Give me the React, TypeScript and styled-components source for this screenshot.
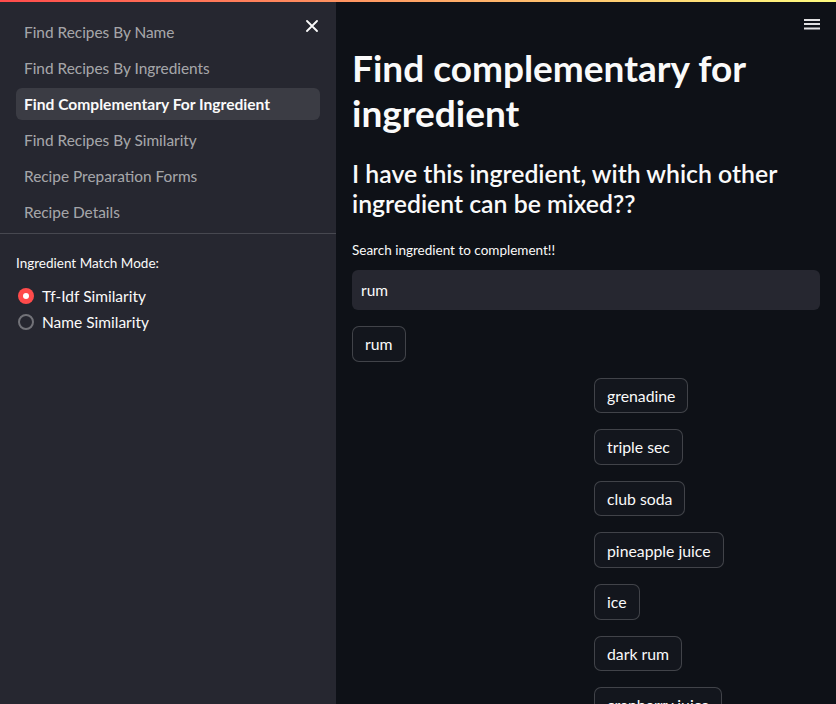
import React from "react";
import styled, { createGlobalStyle } from "styled-components";

const GlobalStyle = createGlobalStyle`
  html, body {
    margin: 0;
    padding: 0;
    height: 100%;
    background: #0e1117;
  }
  body {
    font-family: Lato, "Noto Sans", sans-serif;
    color: #fafafa;
    -webkit-font-smoothing: antialiased;
  }
  *, *::before, *::after { box-sizing: border-box; }
`;

const Shell = styled.div`
  position: relative;
  display: flex;
  height: 100vh;
  overflow: hidden;
`;

const Decoration = styled.div`
  position: absolute;
  top: 0;
  left: 0;
  right: 0;
  height: 2px;
  background: linear-gradient(90deg, #ff4b4b, #fffd80);
  z-index: 10;
`;

const Sidebar = styled.aside`
  position: relative;
  flex: none;
  width: 336px;
  background: #262730;
  display: flex;
  flex-direction: column;
`;

const IconButton = styled.button<{ $top: number }>`
  position: absolute;
  top: ${(p) => p.$top}px;
  right: 12px;
  width: 24px;
  height: 24px;
  padding: 0;
  border: none;
  background: transparent;
  color: #fafafa;
  display: flex;
  align-items: center;
  justify-content: center;
  cursor: pointer;
`;

const Nav = styled.nav`
  display: flex;
  flex-direction: column;
  gap: 4px;
  padding: 16px 16px 5px;
`;

const NavItem = styled.a<{ $active?: boolean }>`
  display: flex;
  align-items: center;
  height: 32px;
  padding: 0 8px;
  border-radius: 6px;
  font-size: ${(p) => (p.$active ? "15.6px" : "15.4px")};
  text-decoration: none;
  color: ${(p) => (p.$active ? "#fafafa" : "rgba(250,250,250,0.62)")};
  font-weight: ${(p) => (p.$active ? 700 : 400)};
  background: ${(p) => (p.$active ? "rgba(250,250,250,0.1)" : "transparent")};
`;

const Divider = styled.hr`
  margin: 0;
  border: none;
  height: 1px;
  background: rgba(250, 250, 250, 0.16);
`;

const SideSection = styled.div`
  padding: 19px 16px;
  display: flex;
  flex-direction: column;
`;

const WidgetLabel = styled.div`
  font-size: 13.5px;
  line-height: 21px;
  color: #fafafa;
`;

const RadioGroup = styled.div`
  display: flex;
  flex-direction: column;
  margin-top: 9px;
`;

const RadioRow = styled.label`
  display: flex;
  align-items: center;
  gap: 8px;
  height: 26px;
  padding-left: 2px;
  font-size: 15.5px;
  color: #fafafa;
`;

const RadioDot = styled.span<{ $checked?: boolean }>`
  width: 16px;
  height: 16px;
  border-radius: 50%;
  flex: none;
  display: flex;
  align-items: center;
  justify-content: center;
  background: ${(p) => (p.$checked ? "#ff4b4b" : "transparent")};
  border: ${(p) => (p.$checked ? "none" : "2px solid rgba(250,250,250,0.36)")};
  &::after {
    content: "";
    display: ${(p) => (p.$checked ? "block" : "none")};
    width: 6px;
    height: 6px;
    border-radius: 50%;
    background: #ffffff;
  }
`;

const Main = styled.main`
  position: relative;
  flex: 1;
  min-width: 0;
  overflow: hidden;
  padding: 45px 16px 0;
`;

const Content = styled.div`
  display: flex;
  flex-direction: column;
`;

const Title = styled.h1`
  margin: 0;
  font-size: 37px;
  line-height: 45px;
  font-weight: 700;
  color: #fafafa;
`;

const Subtitle = styled.h2`
  margin: 24px 0 0;
  font-size: 24.8px;
  line-height: 30px;
  font-weight: 600;
  color: #fafafa;
`;

const FieldLabel = styled(WidgetLabel)`
  margin-top: 21px;
`;

const TextInput = styled.input`
  margin-top: 9px;
  height: 40px;
  width: 100%;
  padding: 0 9px;
  border: none;
  border-radius: 6px;
  background: #262730;
  color: #fafafa;
  font-family: inherit;
  font-size: 15.5px;
  outline: none;
`;

const Stack = styled.div<{ $mt?: number }>`
  display: flex;
  flex-direction: column;
  align-items: flex-start;
  gap: 16px;
  margin-top: ${(p) => p.$mt ?? 0}px;
`;

const Columns = styled.div`
  display: grid;
  grid-template-columns: 1fr 1fr;
  gap: 16px;
  align-self: stretch;
`;

const PillButton = styled.button`
  height: 35.6px;
  padding: 0 12px;
  border: 1px solid rgba(250, 250, 250, 0.2);
  border-radius: 7px;
  background: #13161d;
  color: #fafafa;
  font-family: inherit;
  font-size: 15.8px;
  white-space: nowrap;
  cursor: pointer;
`;

const pages = [
  "Find Recipes By Name",
  "Find Recipes By Ingredients",
  "Find Complementary For Ingredient",
  "Find Recipes By Similarity",
  "Recipe Preparation Forms",
  "Recipe Details",
];

const complements = [
  "grenadine",
  "triple sec",
  "club soda",
  "pineapple juice",
  "ice",
  "dark rum",
  "cranberry juice",
];

export default function App() {
  return (
    <>
      <GlobalStyle />
      <Shell>
        <Decoration />
        <Sidebar>
          <IconButton $top={14} aria-label="Close sidebar">
            <svg width="12" height="12" viewBox="0 0 12 12">
              <path d="M1 1L11 11M11 1L1 11" stroke="#fafafa" strokeWidth="1.8" strokeLinecap="round" />
            </svg>
          </IconButton>
          <Nav>
            {pages.map((p) => (
              <NavItem key={p} $active={p === "Find Complementary For Ingredient"}>
                {p}
              </NavItem>
            ))}
          </Nav>
          <Divider />
          <SideSection>
            <WidgetLabel>Ingredient Match Mode:</WidgetLabel>
            <RadioGroup>
              <RadioRow>
                <RadioDot $checked />
                Tf-Idf Similarity
              </RadioRow>
              <RadioRow>
                <RadioDot />
                Name Similarity
              </RadioRow>
            </RadioGroup>
          </SideSection>
        </Sidebar>
        <Main>
          <IconButton $top={13} aria-label="Menu">
            <svg width="16" height="12" viewBox="0 0 16 12">
              <path d="M0 1H16M0 5H16M0 9.5H16" stroke="#e0e0e2" strokeWidth="1.8" />
            </svg>
          </IconButton>
          <Content>
            <Title>Find complementary for ingredient</Title>
            <Subtitle>I have this ingredient, with which other ingredient can be mixed??</Subtitle>
            <FieldLabel>Search ingredient to complement!!</FieldLabel>
            <TextInput defaultValue="rum" />
            <Stack $mt={16}>
              <PillButton>rum</PillButton>
              <Columns>
                <div />
                <Stack>
                  {complements.map((c) => (
                    <PillButton key={c}>{c}</PillButton>
                  ))}
                </Stack>
              </Columns>
            </Stack>
          </Content>
        </Main>
      </Shell>
    </>
  );
}
